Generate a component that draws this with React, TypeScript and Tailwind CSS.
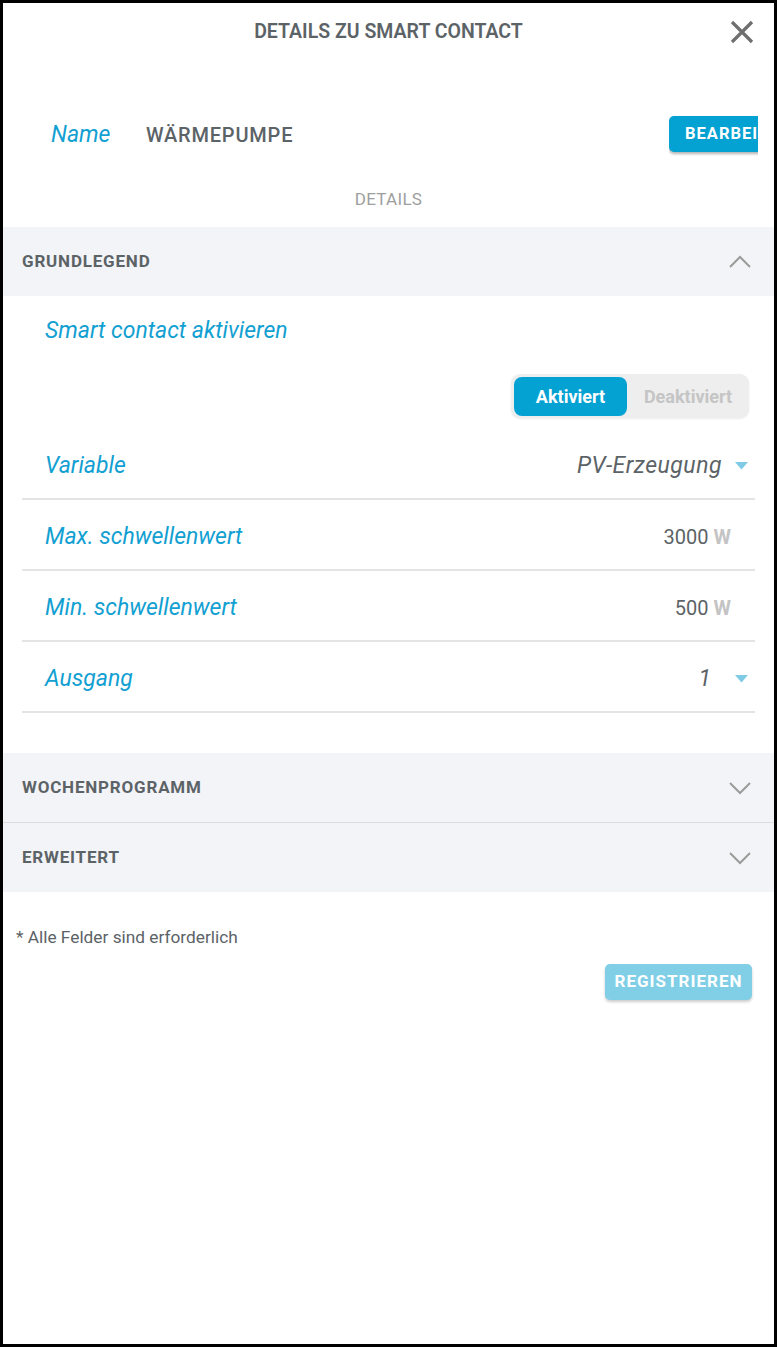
import React from "react";

const font = { fontFamily: "Roboto, 'Noto Sans', sans-serif" };

function Chevron({ up }: { up?: boolean }) {
  return (
    <svg width="22" height="14" viewBox="0 0 22 14" fill="none">
      <polyline
        points={up ? "1,12 11,2 21,12" : "1,2 11,12 21,2"}
        stroke="#9b9b9b"
        strokeWidth="2"
        strokeLinejoin="miter"
      />
    </svg>
  );
}

function Caret() {
  return (
    <svg width="13" height="8" viewBox="0 0 13 8">
      <polygon points="0,0 13,0 6.5,7.5" fill="#7fcbe6" />
    </svg>
  );
}

function SectionHeader({ title, up }: { title: string; up?: boolean }) {
  return (
    <div className="flex h-[69px] items-center justify-between bg-[#f3f4f7] pl-[19px] pr-[23px]">
      <span className="text-[17px] font-bold tracking-[0.8px] text-[#5c6367]">
        {title}
      </span>
      <Chevron up={up} />
    </div>
  );
}

function Row({
  label,
  children,
}: {
  label: string;
  children: React.ReactNode;
}) {
  return (
    <div className="flex h-[71px] items-center justify-between border-b-2 border-[#e4e4e4] pl-[23px] pt-[5px]">
      <span className="text-[23px] italic text-[#12a0d2]">{label}</span>
      {children}
    </div>
  );
}

export default function App() {
  return (
    <div
      style={font}
      className="box-border h-[1347px] w-[777px] border-[3px] border-black bg-white"
    >
      <div className="grid h-[57px] grid-cols-[1fr_auto_1fr] items-center pt-[1px]">
        <div />
        <h1 className="text-[19.5px] font-semibold text-[#5c6367]">
          DETAILS ZU SMART CONTACT
        </h1>
        <div className="flex justify-end pr-[20px]">
          <svg width="24" height="24" viewBox="0 0 24 24">
            <path
              d="M2 2 L22 22 M22 2 L2 22"
              stroke="#6f6f6f"
              strokeWidth="3.2"
              strokeLinecap="butt"
            />
          </svg>
        </div>
      </div>

      <div className="mt-[54px] flex h-[42px] items-center pl-[48px] pr-[16px]">
        <span className="w-[95px] text-[23px] italic text-[#12a0d2]">
          Name
        </span>
        <span className="flex-1 text-[20px] font-medium tracking-[0.8px] text-[#5c6367]">
          WÄRMEPUMPE
        </span>
        <div className="w-[89px] overflow-hidden pb-[4px] pt-[2px]">
          <button className="h-[36px] whitespace-nowrap rounded-[5px] bg-[#04a1d3] px-[16px] text-[16.5px] font-bold tracking-[1px] text-white shadow-[0_2px_3px_rgba(0,0,0,0.3)]">
            BEARBEITEN
          </button>
        </div>
      </div>

      <div className="mt-[33px] h-[20px] text-center text-[17px] leading-[20px] tracking-[0.3px] text-[#9e9e9e]">
        DETAILS
      </div>

      <div className="mt-[18px]">
        <SectionHeader title="GRUNDLEGEND" up />
        <div className="pb-[40px]">
          <div className="mt-[21px] h-[28px] pl-[42px] text-[23px] italic leading-[28px] text-[#12a0d2]">
            Smart contact aktivieren
          </div>
          <div className="mt-[29px] flex justify-end pr-[25px]">
            <div className="flex h-[44px] w-[238px] items-center rounded-[9px] bg-[#eeeeee] p-[3px] shadow-[0_1px_2px_rgba(0,0,0,0.08)]">
              <div className="flex h-[39px] w-[113px] items-center justify-center rounded-[8px] bg-[#04a1d3] text-[18px] font-bold text-white">
                Aktiviert
              </div>
              <div className="flex h-[39px] flex-1 items-center justify-center pl-[3px] text-[18px] font-bold text-[#c5c5c5]">
                Deaktiviert
              </div>
            </div>
          </div>
          <div className="mx-[19px] mt-[11px]">
            <Row label="Variable">
              <div className="flex items-center gap-[13px] pr-[7px]">
                <span className="text-[23px] italic tracking-[0.5px] text-[#5c6367]">
                  PV-Erzeugung
                </span>
                <Caret />
              </div>
            </Row>
            <Row label="Max. schwellenwert">
              <div className="pr-[24px] text-[20px] text-[#5c6367]">
                3000 <span className="font-bold text-[#c4c4c4]">W</span>
              </div>
            </Row>
            <Row label="Min. schwellenwert">
              <div className="pr-[24px] text-[20px] text-[#5c6367]">
                500 <span className="font-bold text-[#c4c4c4]">W</span>
              </div>
            </Row>
            <Row label="Ausgang">
              <div className="flex items-center gap-[24px] pr-[7px]">
                <span className="text-[23px] italic text-[#5c6367]">1</span>
                <Caret />
              </div>
            </Row>
          </div>
        </div>
        <SectionHeader title="WOCHENPROGRAMM" />
        <div className="h-px bg-[#dcdcdc]" />
        <SectionHeader title="ERWEITERT" />
      </div>

      <div className="mt-[35px] h-[20px] pl-[13px] text-[17.3px] leading-[20px] text-[#5c6367]">
        * Alle Felder sind erforderlich
      </div>
      <div className="mt-[17px] flex justify-end pr-[22px]">
        <button className="h-[36px] w-[147px] rounded-[5px] bg-[#80cfe7] text-[17px] font-bold tracking-[1px] text-white shadow-[0_2px_3px_rgba(0,0,0,0.2)]">
          REGISTRIEREN
        </button>
      </div>
    </div>
  );
}
